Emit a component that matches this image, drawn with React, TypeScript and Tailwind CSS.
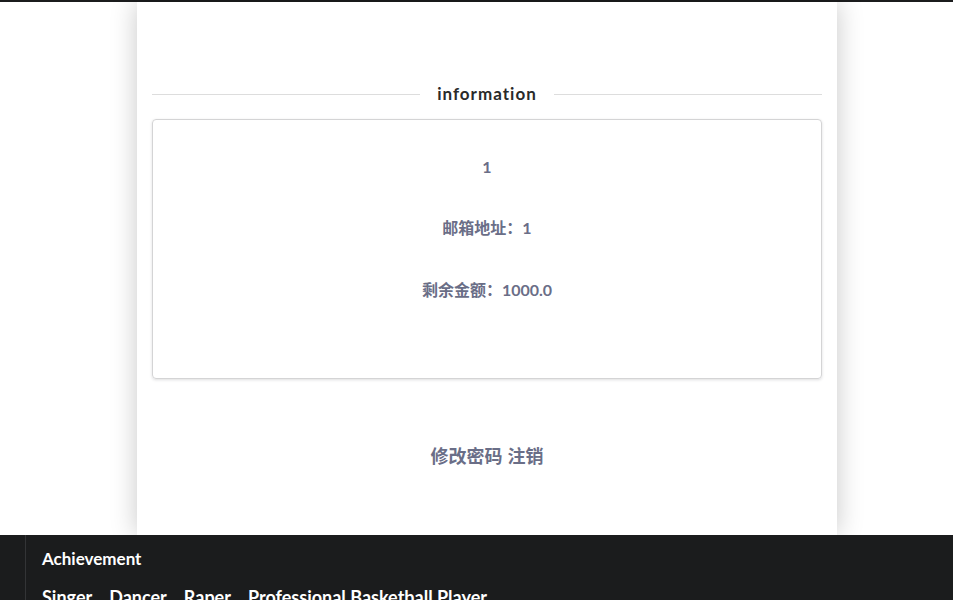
export default function App() {
  return (
    <div className="min-h-screen bg-white font-['Lato','Noto_Sans_CJK_SC',sans-serif]">
      <div className="h-[2px] bg-[#1b1c1d]" />
      <div className="ml-[137px] w-[700px] bg-white px-[15px] pt-[81px] pb-[64px] shadow-[0_0_25px_rgba(0,0,0,0.22)]">
        <div className="flex h-[22px] items-center">
          <div className="h-px flex-1 bg-[#dddddd]" />
          <span className="px-[17px] text-[17px] font-bold tracking-[0.06em] text-[#2a2a2a]">information</span>
          <div className="h-px flex-1 bg-[#dddddd]" />
        </div>
        <div className="mt-[14px] rounded-[4px] border border-[#d4d4d5] pt-[16px] pb-[57px] text-center text-[16px] font-bold text-[#6a6e87] shadow-[0_1px_3px_rgba(34,36,38,0.15)]">
          <div className="flex h-[61px] items-center justify-center">1</div>
          <div className="flex h-[62px] items-center justify-center">邮箱地址：1</div>
          <div className="flex h-[62px] items-center justify-center">剩余金额：1000.0</div>
        </div>
        <div className="mt-[62px] flex h-[30px] items-center justify-center gap-[5px] text-[18px] font-bold text-[#6a6e87]">
          <span>修改密码</span>
          <span>注销</span>
        </div>
      </div>
      <div className="bg-[#1b1c1d] pl-[25px]">
        <div className="border-l border-[#333436] pl-[16px] pt-[13px] pb-[20px] text-white">
          <div className="text-[17px] font-bold leading-[22px]">Achievement</div>
          <div className="mt-[16px] flex gap-[17px] text-[18px] font-bold leading-[22px]">
            <span>Singer</span>
            <span>Dancer</span>
            <span>Raper</span>
            <span>Professional Basketball Player</span>
          </div>
        </div>
      </div>
    </div>
  )
}
